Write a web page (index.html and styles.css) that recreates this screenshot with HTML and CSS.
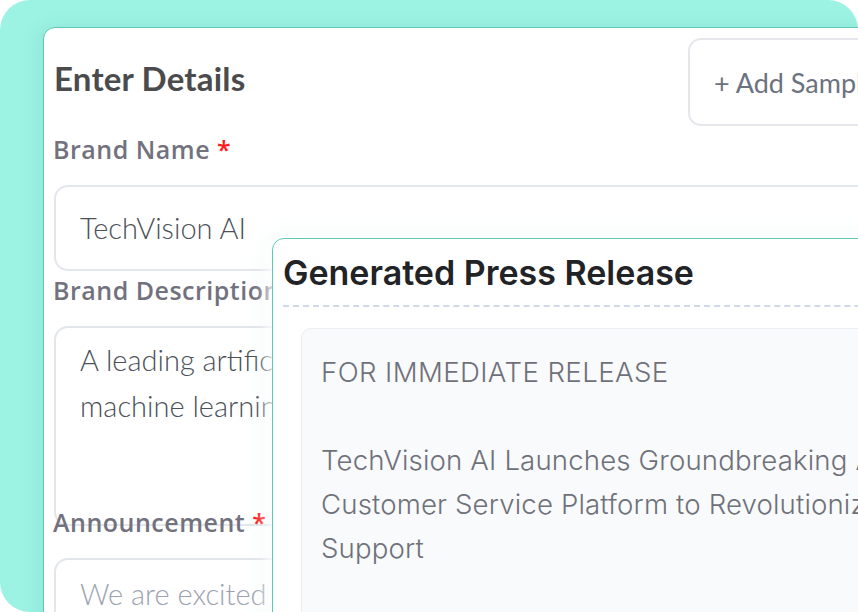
FILE: index.html
```html
<!DOCTYPE html>
<html>
<head>
<meta charset="utf-8">
<link rel="stylesheet" href="styles.css">
</head>
<body>
<div class="stage">
  <section class="form-card">
    <div class="form-head">
      <h1 class="form-title">Enter Details</h1>
      <button class="sample-btn">+ Add Sample Data</button>
    </div>
    <label class="field-label">Brand Name <span class="req">*</span></label>
    <div class="field field-input">TechVision AI</div>
    <label class="field-label field-label-tight">Brand Description</label>
    <div class="field field-area">A leading artificial intelligence company specializing in<br>machine learning solutions for enterprise customer support.</div>
    <label class="field-label field-label-over">Announcement <span class="req">*</span></label>
    <div class="field field-announce placeholder">We are excited to announce the launch of our new platform</div>
  </section>

  <section class="release-card">
    <h2 class="release-title">Generated Press Release</h2>
    <div class="release-body">
      <p class="release-line">FOR IMMEDIATE RELEASE</p>
      <p class="release-para">TechVision AI Launches Groundbreaking AI-Powered<br>Customer Service Platform to Revolutionize Customer<br>Support</p>
    </div>
  </section>
</div>
</body>
</html>
```

FILE: styles.css
```css
* { box-sizing: border-box; }
html, body {
  margin: 0;
  padding: 0;
  width: 858px;
  height: 612px;
  overflow: hidden;
  background: #ffffff;
}
.stage {
  position: relative;
  width: 858px;
  height: 612px;
  background: #9cf3e4;
  border-radius: 30px;
  padding: 27px 0 0 43px;
}
.form-card {
  width: 1000px;
  height: 700px;
  background: #ffffff;
  border: 1px solid #5cc9b4;
  border-radius: 12px;
  padding: 10px 11px 0 10px;
  box-shadow: -4px 0 18px rgba(40, 120, 110, 0.10);
  font-family: "Lato", "Open Sans", sans-serif;
}
.form-head {
  display: grid;
  grid-template-columns: 634px 1fr;
  align-items: start;
  height: 88px;
}
.form-title {
  margin: 0;
  padding-top: 18px;
  font-size: 33px;
  line-height: 44px;
  font-weight: 700;
  color: #4b4b4d;
  letter-spacing: 0.2px;
}
.sample-btn {
  height: 88px;
  width: 356px;
  background: #ffffff;
  border: 2px solid #e6e7ec;
  border-radius: 13px;
  font-family: "Lato", "Open Sans", sans-serif;
  font-size: 27px;
  font-weight: 400;
  color: #6b7280;
  text-align: left;
  padding: 0 0 0 24px;
}
.field-label {
  display: block;
  font-family: "Open Sans", "Lato", sans-serif;
  font-size: 25px;
  line-height: 30px;
  font-weight: 600;
  letter-spacing: 0.5px;
  color: #72727e;
  margin: 8px 0 21px -1px;
  white-space: nowrap;
}
.field-label-tight { margin-top: 4px; }
.req { color: #ff1a1a; }
.field {
  width: 960px;
  border: 2px solid #e3e6eb;
  border-radius: 14px;
  padding: 0 24px;
  font-size: 29px;
  font-weight: 300;
  color: #4b5059;
  white-space: nowrap;
  overflow: hidden;
}
.field-input {
  height: 86px;
  line-height: 82px;
}
.field-area {
  height: 200px;
  padding-top: 9px;
  line-height: 46px;
}
.field-label-over {
  margin-top: -19px;
  position: relative;
}
.field-announce {
  height: 90px;
  padding-top: 14px;
  line-height: 40px;
}
.placeholder { color: #9ca3af; }

.release-card {
  position: absolute;
  left: 272px;
  top: 238px;
  width: 800px;
  height: 500px;
  background: #ffffff;
  border: 1px solid #5cc9b4;
  border-radius: 12px;
  padding: 12px 0 0 10px;
  box-shadow: -6px 0 14px rgba(255, 255, 255, 0.85), -4px 0 24px rgba(92, 201, 180, 0.10);
}
.release-title {
  margin: 0;
  font-family: "Inter", "Liberation Sans", sans-serif;
  font-size: 34px;
  font-weight: 600;
  color: #222326;
  line-height: 44px;
  padding-bottom: 10px;
  border-bottom: 2px dashed #cfd9e7;
}
.release-body {
  margin: 21px 0 0 18px;
  height: 400px;
  background: #f9fafb;
  border: 1px solid #eceef2;
  border-radius: 10px;
  padding: 21px 19px;
  font-family: "Inter", "Liberation Sans", sans-serif;
  font-size: 27.6px;
  letter-spacing: 0.15px;
  font-weight: 300;
  color: #6f717a;
  line-height: 44px;
  white-space: nowrap;
}
.release-line { margin: 0 0 44px 0; letter-spacing: 0.4px; }
.release-para { margin: 0; }
```
